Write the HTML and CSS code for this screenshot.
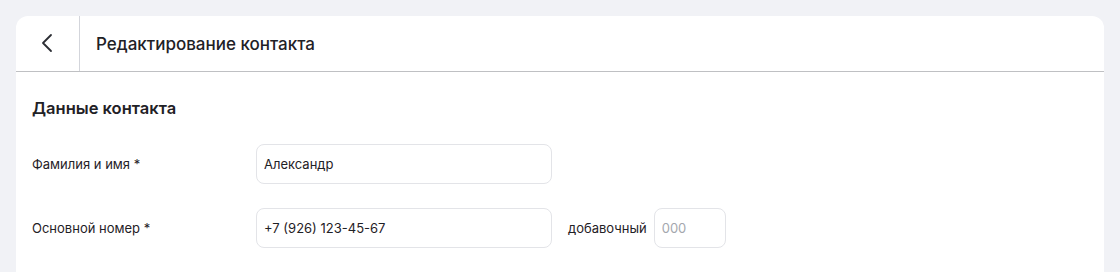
FILE: index.html
```html
<!DOCTYPE html>
<html lang="ru">
<head>
    <meta charset="UTF-8">
    <meta name="viewport" content="width=device-width, initial-scale=1.0">
    <title>Редактирование контакта</title>
    <link rel="stylesheet" href="styles.css">
</head>
<body>
    <div class="card">
        <div class="card-header">
            <button class="back-btn" aria-label="Назад">
                <svg width="24" height="24" viewBox="0 0 24 24" fill="none">
                    <path d="M15 4L7 12L15 20" stroke="#2b2d33" stroke-width="1.8" stroke-linecap="round" stroke-linejoin="round"/>
                </svg>
            </button>
            <h1>Редактирование контакта</h1>
        </div>

        <div class="section">
            <h2>Данные контакта</h2>
            <div class="form-row">
                <label for="name">Фамилия и имя *</label>
                <input type="text" id="name" class="field" value="Александр" />
            </div>
            <div class="form-row">
                <label for="phone">Основной номер *</label>
                <input type="text" id="phone" class="field" value="+7 (926) 123-45-67" />
                <span class="ext-label">добавочный</span>
                <input type="text" class="field field-small" placeholder="000" />
            </div>
        </div>
    </div>
</body>
</html>
```

FILE: styles.css
```css
body {
    margin: 0;
    padding: 16px 16px 0 16px;
    background-color: #f1f2f6;
    font-family: Inter, "Noto Sans", Arial, sans-serif;
    color: #1f2126;
}
.card {
    background-color: #fff;
    border-radius: 12px 12px 0 0;
    min-height: 256px;
}
.card-header {
    display: flex;
    align-items: center;
    height: 55px;
    border-bottom: 1px solid #bfc0c3;
}
.back-btn {
    width: 64px;
    height: 100%;
    display: flex;
    align-items: center;
    justify-content: center;
    background: none;
    border: none;
    border-right: 1px solid #d3d5db;
    padding: 0 0 2px 0;
    cursor: pointer;
}
.card-header h1 {
    margin: 0 0 0 16px;
    font-size: 17px;
    font-weight: 500;
}
.section {
    padding: 26px 16px 0 16px;
}
.section h2 {
    margin: 0 0 26px 0;
    font-size: 16.5px;
    font-weight: 600;
}
.form-row {
    display: flex;
    align-items: center;
    margin-bottom: 24px;
}
.form-row label {
    width: 224px;
    font-size: 13px;
}
.field {
    box-sizing: border-box;
    width: 296px;
    height: 40px;
    padding: 0 7px;
    border: 1px solid #e3e4e8;
    border-radius: 8px;
    font-family: inherit;
    font-size: 13px;
    color: #1f2126;
    outline: none;
}
.field::placeholder {
    color: #a4a7ae;
}
.ext-label {
    margin: 0 7px 0 16px;
    font-size: 13px;
}
.field-small {
    width: 72px;
}
```
